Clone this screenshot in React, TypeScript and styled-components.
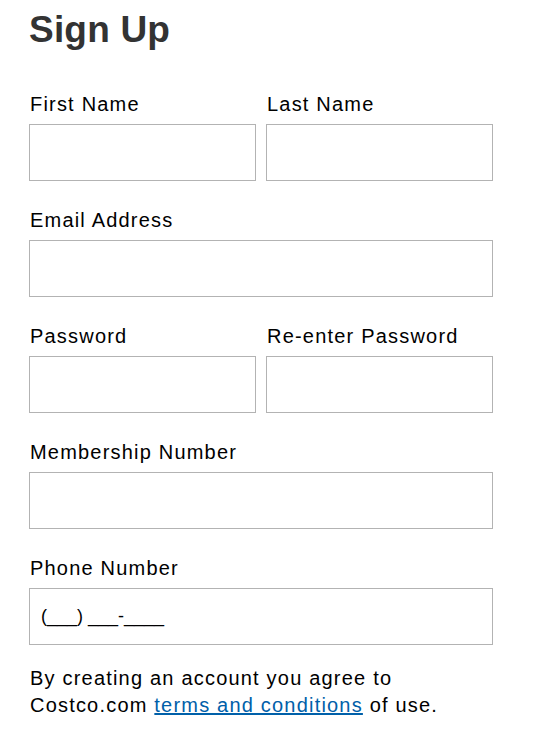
import React from "react";
import styled, { createGlobalStyle } from "styled-components";

const Global = createGlobalStyle`
  html, body { margin: 0; padding: 0; background: #fff; }
  body { font-family: "Liberation Sans", Arial, sans-serif; color: #000; }
`;

const Page = styled.div`
  width: 464px;
  padding: 0 0 0 29px;
`;

const Title = styled.h1`
  margin: 0;
  padding-top: 8px;
  font-size: 37px;
  line-height: 44px;
  font-weight: 700;
  color: #333;
  letter-spacing: 0.2px;
`;

const Form = styled.form`
  display: flex;
  flex-direction: column;
  gap: 28px;
  margin-top: 41px;
`;

const Row = styled.div`
  display: grid;
  grid-template-columns: 1fr 1fr;
  column-gap: 10px;
`;

const Field = styled.div`
  display: flex;
  flex-direction: column;
`;

const Label = styled.label`
  font-size: 20px;
  line-height: 23px;
  letter-spacing: 1.2px;
  margin: 0 0 8px 1px;
  color: #000;
`;

const Input = styled.input`
  box-sizing: border-box;
  width: 100%;
  height: 57px;
  border: 1px solid #b3b3b3;
  border-radius: 0;
  padding: 0 11px;
  font-family: "Liberation Sans", Arial, sans-serif;
  font-size: 18px;
  letter-spacing: 0;
  color: #000;
  outline: none;
  &::placeholder { color: #000; opacity: 1; }
`;

const Terms = styled.p`
  margin: 20px 0 0 1px;
  font-size: 20px;
  line-height: 27px;
  letter-spacing: 1.2px;
  color: #000;
`;

const Link = styled.a`
  color: #0060a9;
  text-decoration: underline;
`;

export default function App() {
  return (
    <>
      <Global />
      <Page>
        <Title>Sign Up</Title>
        <Form>
          <Row>
            <Field>
              <Label>First Name</Label>
              <Input />
            </Field>
            <Field>
              <Label>Last Name</Label>
              <Input />
            </Field>
          </Row>
          <Field>
            <Label>Email Address</Label>
            <Input />
          </Field>
          <Row>
            <Field>
              <Label>Password</Label>
              <Input type="password" />
            </Field>
            <Field>
              <Label>Re-enter Password</Label>
              <Input type="password" />
            </Field>
          </Row>
          <Field>
            <Label>Membership Number</Label>
            <Input />
          </Field>
          <Field>
            <Label>Phone Number</Label>
            <Input placeholder="(___) ___-____" />
          </Field>
        </Form>
        <Terms>
          By creating an account you agree to
          <br />
          Costco.com <Link href="#">terms and conditions</Link> of use.
        </Terms>
      </Page>
    </>
  );
}
